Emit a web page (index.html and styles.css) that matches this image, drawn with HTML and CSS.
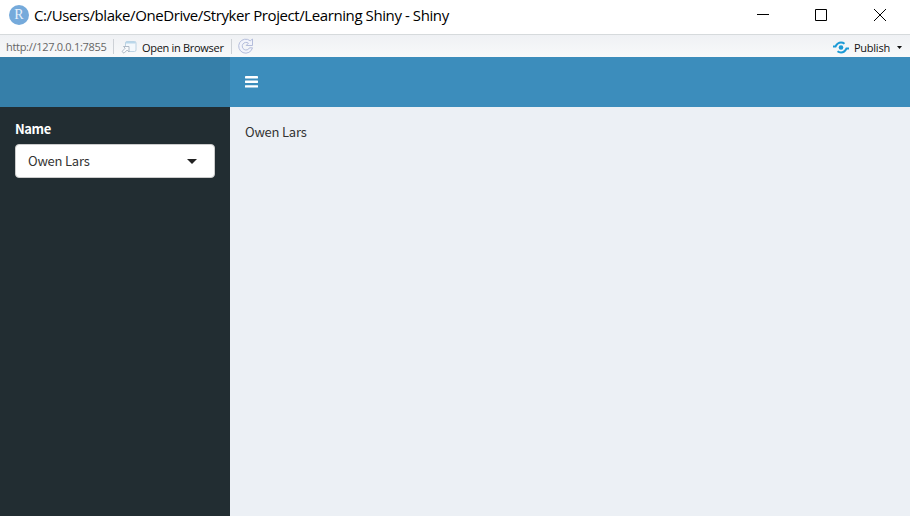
FILE: index.html
```html
<!DOCTYPE html>
<html lang="en">
<head>
<meta charset="utf-8">
<title>Learning Shiny - Shiny</title>
<link rel="stylesheet" href="styles.css">
</head>
<body>
<div class="window">
  <header class="titlebar">
    <span class="app-icon">R</span>
    <span class="window-title">C:/Users/blake/OneDrive/Stryker Project/Learning Shiny - Shiny</span>
    <div class="controls">
      <svg width="14" height="14" viewBox="0 0 14 14"><path d="M1 6.500h12"/></svg>
      <svg width="14" height="14" viewBox="0 0 14 14"><path d="M1.500 1.500h11v11h-11z"/></svg>
      <svg class="close" width="14" height="14" viewBox="0 0 14 14"><path d="M1 1l12 12M13 1L1 13"/></svg>
    </div>
  </header>
  <div class="toolbar">
    <span class="url">http://127.0.0.1:7855</span>
    <span class="divider"></span>
    <svg class="open-icon" width="16" height="14" viewBox="0 0 16 14">
      <path d="M4.500 6V3q0-1.500 1.500-1.500h7.500q1.500 0 1.500 1.500v7q0 1.500-1.500 1.500H8" fill="#f3f8fc" stroke="#bcd2e2"/>
      <path d="M5 2.500h9.500" stroke="#b9d7ea" stroke-width="2"/>
      <path d="M1 11.500l3.200-3.300L2.500 6.500H8v5.500L6.200 10l-3.200 3.200z" fill="#f8fafc" stroke="#a7b2bf" stroke-width=".9"/>
    </svg>
    <span class="open">Open in Browser</span>
    <span class="divider"></span>
    <svg class="reload" width="16" height="16" viewBox="0 0 16 16">
      <path d="M12.200 2.800L14.500 1v6.500H8.200l2.200-2.300a3.800 3.800 0 1 0 1.100 4.600h3A7 7 0 1 1 12.200 2.800z" fill="#f2f4fb" stroke="#b4bddb"/>
    </svg>
    <div class="publish">
      <svg width="16" height="13" viewBox="0 0 16 13" fill="none" stroke="#1b9ad6" stroke-width="2">
        <path d="M0 5.500h2.500C4 2.500 6 1.500 8 1.500q2 0 3.500 1.200"/>
        <path d="M16 7.500h-2.500C12 10.500 10 11.500 8 11.500q-2 0-3.500-1.200"/>
        <circle cx="8" cy="6.500" r="2.300" fill="#1b9ad6" stroke="none"/>
      </svg>
      <span class="publish-label">Publish</span>
      <svg class="small-caret" width="5" height="3" viewBox="0 0 5 3"><path d="M0 0h5L2.500 3z"/></svg>
    </div>
  </div>
  <div class="dashboard">
    <div class="logo"></div>
    <nav class="navbar">
      <svg width="13" height="12" viewBox="0 0 13 12" fill="#fff"><rect width="13" height="2.400" rx=".4"/><rect y="4.600" width="13" height="2.400" rx=".4"/><rect y="9.200" width="13" height="2.400" rx=".4"/></svg>
    </nav>
    <aside class="sidebar">
      <label class="field-label">Name</label>
      <div class="select"><span>Owen Lars</span><svg width="10" height="5" viewBox="0 0 10 5"><path d="M0 0h10L5 5z" fill="#222"/></svg></div>
    </aside>
    <main class="content"><span>Owen Lars</span></main>
  </div>
</div>
</body>
</html>
```
FILE: styles.css
```css
* { box-sizing: border-box; }
body { margin: 0; overflow: hidden; font-family: "Open Sans", "Noto Sans", sans-serif; }
svg { display: block; flex: none; }
span { white-space: nowrap; }
.window { width: 910px; height: 516px; display: flex; flex-direction: column; background: #fff; }
.titlebar { height: 34px; display: flex; align-items: center; padding: 0 23px 4px 9px; flex: none; }
.app-icon { width: 20px; height: 20px; border-radius: 50%; background: #75aadb; color: #e8f2fb; font: 14px/20px "Liberation Serif", serif; text-align: center; }
.window-title { margin-left: 5px; font-size: 15px; line-height: 20px; letter-spacing: -0.41px; color: #000; }
.controls { margin-left: auto; display: flex; gap: 44px; }
.controls .close { margin-left: 1px; }
.controls svg { fill: none; stroke: #000; stroke-width: 1; }
.toolbar { height: 23px; flex: none; display: flex; align-items: center; padding: 2px 8px 0 6px; border-top: 1px solid #d6dadc; background: linear-gradient(#eff1f4, #f8f9fa); font-size: 11px; line-height: 16px; }
.url { width: 107px; color: #666; letter-spacing: -0.3px; }
.divider { width: 1px; height: 15px; background: #cdd1d6; margin-top: -2px; }
.open-icon { margin-left: 7px; }
.open { width: 89px; margin-left: 5px; letter-spacing: -0.3px; color: #111; padding-top: 1px; }
.reload { margin-left: 6px; margin-top: -2px; }
.publish { margin-left: auto; display: flex; align-items: center; }
.publish-label { margin-left: 5px; width: 43px; letter-spacing: -0.25px; color: #111; padding-top: 1px; }
.small-caret { fill: #111; }
.dashboard { flex: 1; display: grid; grid-template: 50px 1fr / 230px 1fr; font-family: "Noto Sans CJK SC", "Noto Sans", sans-serif; font-size: 13px; line-height: 20px; letter-spacing: -0.22px; }
.logo { background: #367fa9; }
.navbar { background: #3c8dbc; padding: 19px 15px; }
.sidebar { background: #222d32; padding: 12px 15px; color: #fff; }
.field-label { display: block; font-weight: 700; margin-bottom: 5px; letter-spacing: -0.4px; }
.select { height: 34px; display: flex; align-items: center; justify-content: space-between; padding: 0 17px 0 12px; border: 1px solid #ccc; border-radius: 4px; background: #fff; color: #333; }
.content { background: #ecf0f5; padding: 15px; color: #333; }
```
